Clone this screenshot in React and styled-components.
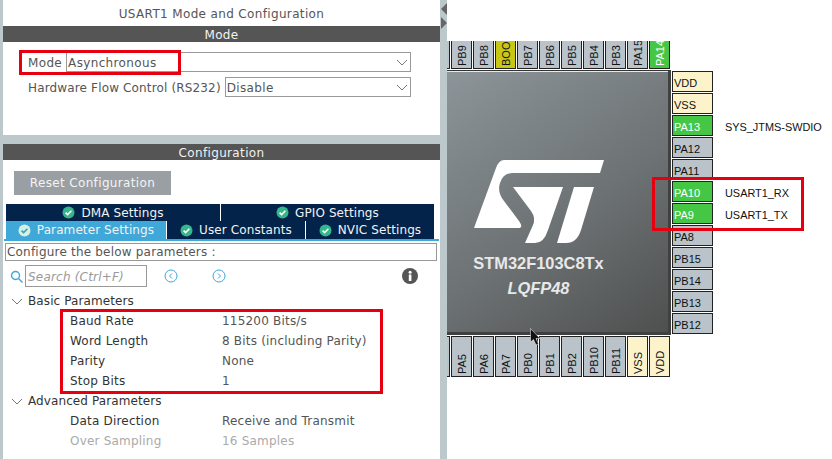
import React from "react";
import styled, { createGlobalStyle } from "styled-components";

const GlobalStyle = createGlobalStyle`
  html, body { margin: 0; padding: 0; background: #fff; }
  * { box-sizing: border-box; }
`;

const Page = styled.div`
  width: 832px;
  height: 459px;
  display: flex;
  overflow: hidden;
  background: #fff;
  font-family: "DejaVu Sans", sans-serif;
`;

const LeftColumn = styled.div`
  width: 447px;
  height: 459px;
  flex: none;
  display: flex;
  flex-direction: column;
  gap: 9px;
  padding: 0 7px 0 3px;
  background: #bcc8cc;
  position: relative;
`;

const Panel = styled.section`
  background: #fff;
  height: ${(p) => p.$h}px;
  flex: ${(p) => (p.$h ? "none" : 1)};
  display: flex;
  flex-direction: column;
  position: relative;
`;

const Title = styled.div`
  height: 26px;
  padding-top: 1px;
  display: flex;
  align-items: center;
  justify-content: center;
  font-size: 12px;
  letter-spacing: 0.35px;
  color: #555;
`;

const SectionBar = styled.div`
  height: 16px;
  line-height: 18px;
  text-align: center;
  background: #545554;
  color: #f2f2f2;
  font-size: 12px;
  letter-spacing: 0.35px;
`;

const FormRows = styled.div`
  display: flex;
  flex-direction: column;
  gap: 5px;
  padding: 10px 29px 0 25px;
`;

const FormRow = styled.div`
  height: 20px;
  display: flex;
  align-items: center;
  gap: 4px;
  font-size: 12px;
  color: #555;
`;

const FieldLabel = styled.span`
  padding-top: 2px;
  letter-spacing: ${(p) => (p.$tight ? "0.15px" : "0.35px")};
`;

const Select = styled.div`
  flex: 1;
  height: 20px;
  display: flex;
  align-items: center;
  justify-content: space-between;
  padding: 0 2px 0 1px;
  border: 1px solid #999;
  letter-spacing: 0.35px;
  color: #555;
`;

const ResetButton = styled.div`
  width: 157px;
  height: 24px;
  margin: 11px 0 9px 11px;
  display: flex;
  align-items: center;
  justify-content: center;
  background: #9a9fa3;
  color: #f4f4f4;
  font-size: 12px;
  letter-spacing: 0.35px;
`;

const TabRow = styled.div`
  display: flex;
  gap: 1px;
  margin: 0 6px 0 3px;
  height: ${(p) => p.$h}px;
`;

const Tab = styled.div`
  flex: ${(p) => (p.$w ? `0 0 ${p.$w}px` : 1)};
  display: flex;
  align-items: center;
  justify-content: center;
  gap: 6px;
  background: ${(p) => (p.$active ? "#3fa8d8" : "#03234b")};
  color: #f2f2f2;
  font-size: 12px;
  letter-spacing: 0.1px;
`;

const TabLine = styled.div`
  height: 2px;
  margin: 0 1px;
  background: #3fa8d8;
`;

const Hint = styled.div`
  height: 18px;
  margin: 2px 3px 0 2px;
  padding-left: 1px;
  border: 1px solid #999;
  font-size: 12px;
  line-height: 16px;
  letter-spacing: 0.2px;
  color: #555;
`;

const SearchRow = styled.div`
  display: flex;
  align-items: center;
  height: 22px;
  margin: 4px 0 0 7px;
`;

const SearchInput = styled.div`
  width: 122px;
  height: 22px;
  margin: 0 17px 0 2px;
  padding-left: 2px;
  border: 1px solid #999;
  font-style: italic;
  font-size: 12px;
  line-height: 22px;
  letter-spacing: 0.2px;
  color: #999;
`;

const NavButton = styled.svg`
  width: 14px;
  height: 14px;
  margin-right: 34px;
  flex: none;
`;

const InfoIcon = styled.svg`
  width: 16px;
  height: 16px;
  margin-left: 142px;
  flex: none;
`;

const Tree = styled.div`
  margin-top: 4px;
  position: relative;
`;

const GroupRow = styled.div`
  height: 20px;
  display: flex;
  align-items: center;
  gap: 5px;
  padding-left: 8px;
  font-size: 12px;
  letter-spacing: 0.1px;
  color: #333;
`;

const ParamRow = styled.div`
  height: 20px;
  display: grid;
  grid-template-columns: 152px 1fr;
  align-items: center;
  padding-left: 67px;
  font-size: 12px;
  letter-spacing: 0.2px;
  color: ${(p) => (p.$muted ? "#aaa" : "#555")};
`;

const ParamLabel = styled.span`
  color: ${(p) => (p.$muted ? "#aaa" : "#333")};
`;

const RedBox = styled.div`
  position: absolute;
  border: 3px solid #e6000f;
  pointer-events: none;
  left: ${(p) => p.$x}px;
  top: ${(p) => p.$y}px;
  width: ${(p) => p.$w}px;
  height: ${(p) => p.$h}px;
`;

const Splitter = styled.div`
  position: absolute;
  right: 0;
  top: 0;
  width: 7px;
  height: 100%;
  background: #bcc8cc;
`;

const Arrow = styled.svg`
  position: absolute;
  left: 1px;
  top: ${(p) => p.$y}px;
  width: 6px;
  height: 12px;
`;

const ChipArea = styled.div`
  flex: 1;
  position: relative;
  display: flex;
  flex-direction: column;
  padding-top: 41px;
`;

const TopPins = styled.div`
  height: 28px;
  width: 223px;
  display: flex;
  align-items: flex-end;
  justify-content: flex-end;
  gap: 1px;
  overflow: hidden;
`;

const BottomPins = styled.div`
  height: 41px;
  width: 223px;
  margin-top: 1px;
  display: flex;
  justify-content: flex-end;
  gap: 1px;
  overflow: hidden;
`;

const VPin = styled.div`
  width: 21px;
  height: 41px;
  flex: none;
  border: 1px solid #222;
  background: ${(p) => p.$color};
  color: ${(p) => (p.$color === GREEN ? "#fff" : "#111")};
  font-family: "Liberation Sans", sans-serif;
  font-size: 11px;
  writing-mode: vertical-rl;
  transform: rotate(180deg);
  display: flex;
  align-items: center;
  padding-top: 2px;
  white-space: nowrap;
`;

const ChipRow = styled.div`
  display: flex;
  align-items: flex-start;
`;

const Chip = styled.div`
  width: 224px;
  height: 265px;
  margin-top: 1px;
  flex: none;
  display: flex;
  flex-direction: column;
  align-items: center;
  padding: 89px 38px 0 0;
  border-top: 1px solid #333;
  border-right: 3px solid #3f4141;
  border-bottom: 3px solid #3f4141;
  box-shadow: inset 0 1px 0 #e8e8e8;
  background: linear-gradient(145deg, #8c9599 0%, #6d7274 55%, #4e504f 100%);
  font-family: "Liberation Sans", sans-serif;
`;

const Logo = styled.svg`
  width: 130px;
  height: 83px;
  flex: none;
`;

const ChipName = styled.div`
  margin-top: 10px;
  font-weight: 700;
  font-size: 16.4px;
  line-height: 20px;
  color: #e8e8e8;
  white-space: nowrap;
`;

const ChipPackage = styled.div`
  margin-top: 5px;
  font-weight: 700;
  font-style: italic;
  font-size: 16.4px;
  line-height: 20px;
  color: #e8e8e8;
`;

const SidePins = styled.div`
  display: flex;
  flex-direction: column;
  gap: 1px;
  margin-top: 2px;
  margin-left: 1px;
`;

const SideRow = styled.div`
  display: flex;
  align-items: center;
  height: 21px;
`;

const HPin = styled.div`
  width: 41px;
  height: 21px;
  flex: none;
  padding: 1px 0 0 1px;
  border: 1px solid #222;
  background: ${(p) => p.$color};
  color: ${(p) => (p.$color === GREEN ? "#fff" : "#111")};
  font-family: "Liberation Sans", sans-serif;
  font-size: 11px;
  line-height: 20px;
`;

const PinLabel = styled.span`
  margin: 2px 0 0 12px;
  font-family: "Liberation Sans", sans-serif;
  font-size: 10.9px;
  color: #111;
  white-space: nowrap;
`;

const Cursor = styled.svg`
  position: absolute;
  left: 83px;
  top: 328px;
  width: 12px;
  height: 18px;
`;

const GRAY = "#b9c3c9";
const GREEN = "#45c745";
const YELLOW = "#c8c814";
const CREAM = "#fdf3cb";

const topPins = [["", GRAY], ["PB9", GRAY], ["PB8", GRAY], ["BOO", YELLOW], ["PB7", GRAY], ["PB6", GRAY], ["PB5", GRAY], ["PB4", GRAY], ["PB3", GRAY], ["PA15", GRAY], ["PA14", GREEN]];
const bottomPins = [["", GRAY], ["PA5", GRAY], ["PA6", GRAY], ["PA7", GRAY], ["PB0", GRAY], ["PB1", GRAY], ["PB2", GRAY], ["PB10", GRAY], ["PB11", GRAY], ["VSS", CREAM], ["VDD", CREAM]];
const sidePins = [
  ["VDD", CREAM], ["VSS", CREAM], ["PA13", GREEN, "SYS_JTMS-SWDIO"], ["PA12", GRAY], ["PA11", GRAY],
  ["PA10", GREEN, "USART1_RX"], ["PA9", GREEN, "USART1_TX"], ["PA8", GRAY], ["PB15", GRAY], ["PB14", GRAY], ["PB13", GRAY], ["PB12", GRAY],
];

const Chevron = () => (
  <svg width="12" height="7" viewBox="0 0 12 7" fill="none" stroke="#777" strokeWidth="1">
    <path d="M1 1l5 5 5-5" />
  </svg>
);

const Check = ({ active }) => (
  <svg width="13" height="13" viewBox="0 0 13 13">
    <circle cx="6.5" cy="6.5" r="6" fill={active ? "#d5efe6" : "#35b68c"} />
    <path d="M3.6 6.6l2 2 3.8-3.8" fill="none" stroke={active ? "#35a5a0" : "#fff"} strokeWidth="1.6" />
  </svg>
);

const Nav = ({ flip }) => (
  <NavButton viewBox="0 0 14 14" fill="none" stroke="#3fa8d8" strokeWidth="1">
    <circle cx="7" cy="7" r="6" />
    <path d={flip ? "M6 4.5l2.5 2.5L6 9.5" : "M8 4.5L5.5 7 8 9.5"} />
  </NavButton>
);

const App = () => {
  return (
    <Page>
      <GlobalStyle />
      <LeftColumn>
        <Panel $h={135}>
          <Title>USART1 Mode and Configuration</Title>
          <SectionBar>Mode</SectionBar>
          <FormRows>
            <FormRow><FieldLabel>Mode</FieldLabel><Select><FieldLabel>Asynchronous</FieldLabel><Chevron /></Select></FormRow>
            <FormRow><FieldLabel $tight>Hardware Flow Control (RS232)</FieldLabel><Select><FieldLabel>Disable</FieldLabel><Chevron /></Select></FormRow>
          </FormRows>
          <RedBox $x={16} $y={50} $w={162} $h={25} />
        </Panel>
        <Panel>
          <SectionBar>Configuration</SectionBar>
          <ResetButton>Reset Configuration</ResetButton>
          <TabRow $h={17}>
            <Tab $w={214}><Check />DMA Settings</Tab>
            <Tab><Check />GPIO Settings</Tab>
          </TabRow>
          <TabRow $h={18}>
            <Tab $w={160} $active><Check active />Parameter Settings</Tab>
            <Tab $w={138}><Check />User Constants</Tab>
            <Tab><Check />NVIC Settings</Tab>
          </TabRow>
          <TabLine />
          <Hint>Configure the below parameters :</Hint>
          <SearchRow>
            <svg width="13" height="13" viewBox="0 0 13 13" fill="none" stroke="#3fa8d8" strokeWidth="1.4">
              <circle cx="5.500" cy="5.500" r="4" /><path d="M8.500 8.500l4 4" />
            </svg>
            <SearchInput>Search (Ctrl+F)</SearchInput>
            <Nav />
            <Nav flip />
            <InfoIcon viewBox="0 0 16 16">
              <circle cx="8" cy="8" r="8" fill="#555" />
              <rect x="6.800" y="6.500" width="2.600" height="6.500" fill="#fff" />
              <circle cx="8.100" cy="4.200" r="1.500" fill="#fff" />
            </InfoIcon>
          </SearchRow>
          <Tree>
            <GroupRow><Chevron />Basic Parameters</GroupRow>
            <ParamRow><ParamLabel>Baud Rate</ParamLabel>115200 Bits/s</ParamRow>
            <ParamRow><ParamLabel>Word Length</ParamLabel>8 Bits (including Parity)</ParamRow>
            <ParamRow><ParamLabel>Parity</ParamLabel>None</ParamRow>
            <ParamRow><ParamLabel>Stop Bits</ParamLabel>1</ParamRow>
            <GroupRow><Chevron />Advanced Parameters</GroupRow>
            <ParamRow><ParamLabel>Data Direction</ParamLabel>Receive and Transmit</ParamRow>
            <ParamRow $muted><ParamLabel $muted>Over Sampling</ParamLabel>16 Samples</ParamRow>
            <RedBox $x={57} $y={18} $w={323} $h={85} />
          </Tree>
        </Panel>
        <Splitter>
          <Arrow $y={3} viewBox="0 0 6 12"><path d="M6 0v12L0 6z" fill="#666" /></Arrow>
          <Arrow $y={17} viewBox="0 0 6 12"><path d="M0 0v12l6-6z" fill="#666" /></Arrow>
        </Splitter>
      </LeftColumn>
      <ChipArea>
        <TopPins>
          {topPins.map(([name, color], i) => <VPin key={i} $color={color}>{name}</VPin>)}
        </TopPins>
        <ChipRow>
          <Chip>
            <Logo viewBox="0 0 130 83">
              <path fill="#fff" d="M30 0H130L126 13H39Q29 13 26 23Q23 32 30 41L45 61Q50 68 44 68H0L22 8Q25 0 30 0Z" />
              <path fill="#fff" d="M39 27H89L74 70Q70 83 61 83H51L59 65Q62 58 57 51Z" />
              <path fill="#fff" d="M100 27H120L107 70Q103 83 92 83H83Z" />
            </Logo>
            <ChipName>STM32F103C8Tx</ChipName>
            <ChipPackage>LQFP48</ChipPackage>
          </Chip>
          <SidePins>
            {sidePins.map(([name, color, label]) => (
              <SideRow key={name}>
                <HPin $color={color}>{name}</HPin>
                {label && <PinLabel>{label}</PinLabel>}
              </SideRow>
            ))}
          </SidePins>
        </ChipRow>
        <BottomPins>
          {bottomPins.map(([name, color], i) => <VPin key={i} $color={color}>{name}</VPin>)}
        </BottomPins>
        <RedBox $x={205} $y={177} $w={152} $h={54} />
        <Cursor viewBox="0 0 12 18">
          <path d="M0.500 0.500V14L3.500 11.500L6 17L8.500 16L6 10.500H10Z" fill="#111" stroke="#fff" strokeWidth="0.500" />
        </Cursor>
      </ChipArea>
    </Page>
  );
};

export default App;
